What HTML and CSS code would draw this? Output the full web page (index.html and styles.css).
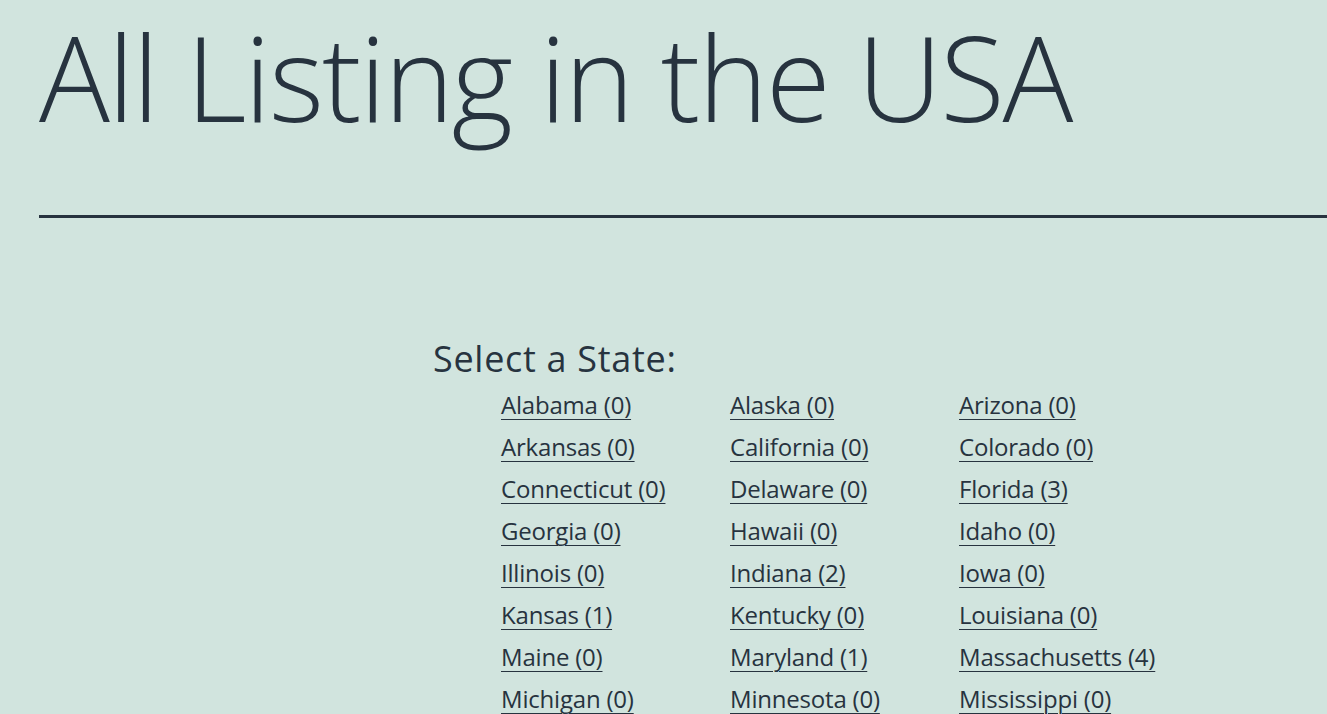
FILE: index.html
```html
<!DOCTYPE html>
<html>
<head>
<meta charset="utf-8">
<link rel="stylesheet" href="styles.css">
</head>
<body>
<div class="page">
  <h1 class="title">All Listing in the USA</h1>
  <hr class="rule">
  <section class="states">
    <h2 class="states-head">Select a State:</h2>
    <ul class="state-list">
      <li><a href="#">Alabama (0)</a></li>
      <li><a href="#">Alaska (0)</a></li>
      <li><a href="#">Arizona (0)</a></li>
      <li><a href="#">Arkansas (0)</a></li>
      <li><a href="#">California (0)</a></li>
      <li><a href="#">Colorado (0)</a></li>
      <li><a href="#">Connecticut (0)</a></li>
      <li><a href="#">Delaware (0)</a></li>
      <li><a href="#">Florida (3)</a></li>
      <li><a href="#">Georgia (0)</a></li>
      <li><a href="#">Hawaii (0)</a></li>
      <li><a href="#">Idaho (0)</a></li>
      <li><a href="#">Illinois (0)</a></li>
      <li><a href="#">Indiana (2)</a></li>
      <li><a href="#">Iowa (0)</a></li>
      <li><a href="#">Kansas (1)</a></li>
      <li><a href="#">Kentucky (0)</a></li>
      <li><a href="#">Louisiana (0)</a></li>
      <li><a href="#">Maine (0)</a></li>
      <li><a href="#">Maryland (1)</a></li>
      <li><a href="#">Massachusetts (4)</a></li>
      <li><a href="#">Michigan (0)</a></li>
      <li><a href="#">Minnesota (0)</a></li>
      <li><a href="#">Mississippi (0)</a></li>
    </ul>
  </section>
</div>
</body>
</html>
```
FILE: styles.css
```css
html, body {
  margin: 0;
  padding: 0;
  background: #d1e4de;
  color: #27333f;
  font-family: "Open Sans", "Noto Sans", sans-serif;
  overflow: hidden;
}
.page {
  padding: 0 0 0 39px;
}
.title {
  margin: 0;
  padding: 2px 0 0 0;
  font-weight: 300;
  font-size: 118px;
  line-height: 150px;
  letter-spacing: -2px;
}
.rule {
  margin: 63px 0 0 0;
  border: 0;
  height: 3px;
  background: #27333f;
}
.states {
  padding: 118px 0 0 394px;
}
.states-head {
  margin: 0;
  font-weight: 400;
  font-size: 36px;
  line-height: 46px;
  letter-spacing: 0.7px;
}
.state-list {
  list-style: none;
  margin: 0;
  padding: 2px 0 0 68px;
  display: grid;
  grid-template-columns: repeat(3, 229px);
  grid-auto-rows: 42px;
}
.state-list a {
  color: #27333f;
  font-size: 24px;
  line-height: 42px;
  letter-spacing: -0.2px;
  text-decoration: underline;
  text-decoration-thickness: 1px;
  text-underline-offset: 5px;
}
```
